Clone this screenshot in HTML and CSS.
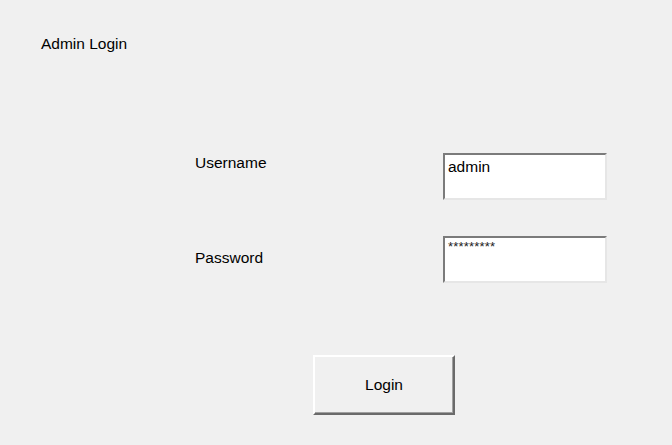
FILE: index.html
```html
<!DOCTYPE html>
<html>
<head>
<meta charset="utf-8">
<link rel="stylesheet" href="styles.css">
</head>
<body>
<div class="window">
  <div class="title">Admin Login</div>
  <div class="form">
    <div class="row row-user">
      <div class="label label-user">Username</div>
      <div class="field"><span class="value">admin</span></div>
    </div>
    <div class="row row-pass">
      <div class="label label-pass">Password</div>
      <div class="field"><span class="stars">*********</span></div>
    </div>
    <div class="actions">
      <div class="button">Login</div>
    </div>
  </div>
</div>
</body>
</html>
```
FILE: styles.css
```css
html, body {
  margin: 0;
  padding: 0;
  background: #f0f0f0;
}
body {
  width: 672px;
  height: 445px;
  overflow: hidden;
  font-family: "Liberation Sans", Arial, sans-serif;
  color: #000;
}
.window {
  display: flex;
  flex-direction: column;
  padding: 34px 0 0 41px;
}
.title {
  font-size: 15.5px;
  line-height: 19px;
}
.form {
  display: flex;
  flex-direction: column;
  margin: 100px 0 0 154px;
}
.row {
  display: flex;
  align-items: flex-start;
}
.row-pass {
  margin-top: 36px;
}
.label {
  width: 248px;
  font-size: 15.5px;
  line-height: 19px;
}
.label-user {
  padding-top: 0;
}
.label-pass {
  padding-top: 12px;
}
.field {
  height: 43px;
  background: #fff;
  border-top: 2px solid #7b7b7b;
  border-left: 2px solid #7b7b7b;
  border-right: 2px solid #e6e6e6;
  border-bottom: 2px solid #e6e6e6;
  box-sizing: content-box;
  padding: 0 0 0 3px;
  width: 157px;
}
.value {
  display: block;
  font-size: 15.5px;
  line-height: 19px;
  padding-top: 2px;
}
.stars {
  display: block;
  font-size: 13px;
  line-height: 12px;
  padding-top: 3px;
  letter-spacing: 0.2px;
  color: #222;
}
.actions {
  display: flex;
  margin: 72px 0 0 118px;
}
.button {
  width: 138px;
  height: 56px;
  display: flex;
  align-items: center;
  justify-content: center;
  background: #f0f0f0;
  border-top: 2px solid #fff;
  border-left: 2px solid #fff;
  border-right: 2px solid #6a6a6a;
  border-bottom: 2px solid #6a6a6a;
  box-shadow: inset -1px -1px 0 #a0a0a0;
  font-size: 15.5px;
}
```
